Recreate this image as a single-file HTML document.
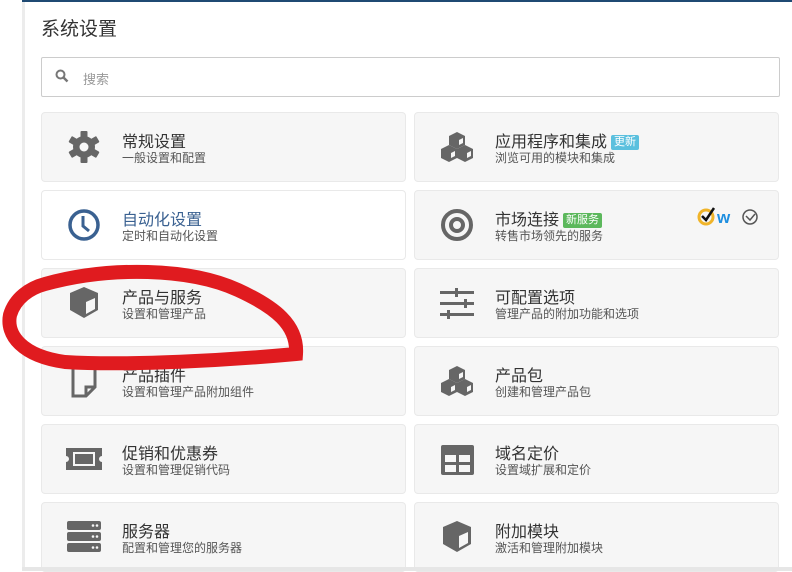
<!DOCTYPE html>
<html><head><meta charset="utf-8"><style>
*{margin:0;padding:0;box-sizing:border-box}
body{width:792px;height:571px;overflow:hidden;background:#fff;position:relative;font-family:"Liberation Sans","Noto Sans CJK SC",sans-serif;color:#333}
.lb{position:absolute;left:0;top:0;width:24px;height:571px;background:#fff}
.lb2{position:absolute;left:22px;top:0;width:3px;height:571px;background:#ececec}
.top{position:absolute;left:22px;top:0;right:0;height:2px;background:#1f4a73}
h1{position:absolute;left:41px;top:14px;font-size:19px;font-weight:normal;color:#333}
.search{position:absolute;left:41px;top:57px;width:739px;height:40px;border:1px solid #ccc;border-radius:2px}
.search span{position:absolute;left:41px;top:11px;font-size:13px;color:#999}
.card{position:absolute;width:365px;height:70px;background:#f6f6f6;border:1px solid #e9e9e9;border-radius:4px}
.card.w{background:#fff}
.ic{position:absolute;left:22px;top:16px;width:40px;height:36px}
.t{position:absolute;left:80px;top:15px;font-size:16px;color:#333;white-space:nowrap}
.s{position:absolute;left:80px;top:36px;font-size:12px;color:#555;white-space:nowrap}
.badge{display:inline-block;font-size:11px;color:#fff;padding:0 3px;border-radius:2px;line-height:15px;vertical-align:2px;margin-left:4px}
</style></head><body>
<div class="lb"></div><div class="lb2"></div><div class="top"></div>
<h1>系统设置</h1>
<div class="search"><svg style="position:absolute;left:13px;top:11px" width="14" height="14" viewBox="0 0 14 14"><circle cx="5.5" cy="5.5" r="4" fill="none" stroke="#777" stroke-width="2"/><path d="M8.5 8.5L12.5 12.5" stroke="#777" stroke-width="2.5"/></svg><span>搜索</span></div>

<div class="card" style="left:41px;top:112px"><svg class="ic" viewBox="0 0 40 36"><g transform="translate(20,18)" fill="#666"><circle r="11"/><g><rect x="-3.5" y="-16" width="7" height="32" rx="1"/><rect x="-3.5" y="-16" width="7" height="32" rx="1" transform="rotate(60)"/><rect x="-3.5" y="-16" width="7" height="32" rx="1" transform="rotate(120)"/></g><circle r="4.5" fill="#f6f6f6"/></g></svg><div class="t">常规设置</div><div class="s">一般设置和配置</div></div>
<div class="card" style="left:414px;top:112px"><svg class="ic" viewBox="0 0 40 36"><g fill="#666"><path d="M20 3l8 4v9l-8 4-8-4V7z"/><path d="M12 16l8 4v9l-8 4-8-4v-9z"/><path d="M28 16l8 4v9l-8 4-8-4v-9z"/></g><g fill="#f6f6f6"><path d="M22 11l4-2v5l-4 2z"/><path d="M14 24l4-2v5l-4 2z"/><path d="M30 24l4-2v5l-4 2z"/></g></svg><div class="t">应用程序和集成<span class="badge" style="background:#5bc0de">更新</span></div><div class="s">浏览可用的模块和集成</div></div>

<div class="card w" style="left:41px;top:190px"><svg class="ic" viewBox="0 0 40 36"><circle cx="20" cy="18" r="14" fill="none" stroke="#3a6191" stroke-width="3.5"/><path d="M19 9v10l6 5" fill="none" stroke="#3a6191" stroke-width="3"/></svg><div class="t" style="color:#3a6191">自动化设置</div><div class="s">定时和自动化设置</div></div>
<div class="card" style="left:414px;top:190px"><svg class="ic" viewBox="0 0 40 36"><circle cx="20" cy="18" r="14" fill="none" stroke="#666" stroke-width="4"/><circle cx="20" cy="18" r="6" fill="none" stroke="#666" stroke-width="4"/></svg><div class="t">市场连接<span class="badge" style="background:#5cb85c">新服务</span></div><div class="s">转售市场领先的服务</div>
<svg style="position:absolute;left:282px;top:14px" width="64" height="22" viewBox="0 0 64 22"><circle cx="9" cy="12" r="7" fill="none" stroke="#f0b429" stroke-width="3"/><path d="M5 11l4 4 8-12" fill="none" stroke="#111" stroke-width="2.5"/><text x="20" y="18" font-family="Liberation Sans" font-weight="bold" font-size="17" fill="#1f8fe0">w</text><circle cx="53" cy="12" r="7" fill="none" stroke="#555" stroke-width="1.5"/><path d="M49 11l4 4 5-6" fill="none" stroke="#555" stroke-width="1.5"/></svg></div>

<div class="card" style="left:41px;top:268px"><svg class="ic" viewBox="0 0 40 36"><path d="M20 2l14 6v17l-14 8-14-8V8z" fill="#666"/><path d="M22 17l9-4v11l-9 5z" fill="#f6f6f6"/></svg><div class="t">产品与服务</div><div class="s">设置和管理产品</div></div>
<div class="card" style="left:414px;top:268px"><svg class="ic" viewBox="0 0 40 36" fill="#666"><rect x="3" y="6" width="34" height="3"/><rect x="3" y="17" width="34" height="3"/><rect x="3" y="28" width="34" height="3"/><rect x="18" y="3" width="3" height="9"/><rect x="27" y="14" width="3" height="9"/><rect x="10" y="25" width="3" height="9"/></svg><div class="t">可配置选项</div><div class="s">管理产品的附加功能和选项</div></div>

<div class="card" style="left:41px;top:346px"><svg class="ic" viewBox="0 0 40 36"><path d="M9 2h22v22l-9 9H9z" fill="none" stroke="#666" stroke-width="3"/><path d="M22 33v-9h9" fill="none" stroke="#666" stroke-width="3"/></svg><div class="t">产品插件</div><div class="s">设置和管理产品附加组件</div></div>
<div class="card" style="left:414px;top:346px"><svg class="ic" viewBox="0 0 40 36"><g fill="#666"><path d="M20 3l8 4v9l-8 4-8-4V7z"/><path d="M12 16l8 4v9l-8 4-8-4v-9z"/><path d="M28 16l8 4v9l-8 4-8-4v-9z"/></g><g fill="#f6f6f6"><path d="M22 11l4-2v5l-4 2z"/><path d="M14 24l4-2v5l-4 2z"/><path d="M30 24l4-2v5l-4 2z"/></g></svg><div class="t">产品包</div><div class="s">创建和管理产品包</div></div>

<div class="card" style="left:41px;top:424px"><svg class="ic" viewBox="0 0 40 36"><path d="M2 7h36v8a3 3 0 0 0 0 6v8H2v-8a3 3 0 0 0 0-6z" fill="#666"/><rect x="9" y="11" width="22" height="14" fill="#f6f6f6"/><rect x="11" y="13" width="18" height="10" fill="#666"/></svg><div class="t">促销和优惠券</div><div class="s">设置和管理促销代码</div></div>
<div class="card" style="left:414px;top:424px"><svg class="ic" viewBox="0 0 40 36"><rect x="4" y="4" width="33" height="30" rx="2" fill="#666"/><rect x="8" y="14" width="11" height="7" fill="#f6f6f6"/><rect x="22" y="14" width="11" height="7" fill="#f6f6f6"/><rect x="8" y="24" width="11" height="7" fill="#f6f6f6"/><rect x="22" y="24" width="11" height="7" fill="#f6f6f6"/></svg><div class="t">域名定价</div><div class="s">设置域扩展和定价</div></div>

<div class="card" style="left:41px;top:502px"><svg class="ic" viewBox="0 0 40 36" fill="#666"><rect x="3" y="2" width="34" height="9" rx="2"/><rect x="3" y="13" width="34" height="9" rx="2"/><rect x="3" y="24" width="34" height="9" rx="2"/><g fill="#f6f6f6"><circle cx="29" cy="6.5" r="1.3"/><circle cx="33" cy="6.5" r="1.3"/><circle cx="29" cy="17.5" r="1.3"/><circle cx="33" cy="17.5" r="1.3"/><circle cx="29" cy="28.5" r="1.3"/><circle cx="33" cy="28.5" r="1.3"/></g></svg><div class="t">服务器</div><div class="s">配置和管理您的服务器</div></div>
<div class="card" style="left:414px;top:502px"><svg class="ic" viewBox="0 0 40 36"><path d="M20 2l14 6v17l-14 8-14-8V8z" fill="#666"/><path d="M22 17l9-4v11l-9 5z" fill="#f6f6f6"/></svg><div class="t">附加模块</div><div class="s">激活和管理附加模块</div></div>

<div style="position:absolute;left:22px;top:567px;width:770px;height:4px;background:#e6e6e6"></div>

<svg style="position:absolute;left:0;top:0" width="792" height="571"><path d="M45 284C110 266 190 268 238 290C275 307 298 325 296 354C230 360 130 366 65 362C22 356 6 335 10 315C15 298 30 288 45 284" fill="none" stroke="#e01b1f" stroke-width="14" stroke-linecap="round"/></svg>
</body></html>
